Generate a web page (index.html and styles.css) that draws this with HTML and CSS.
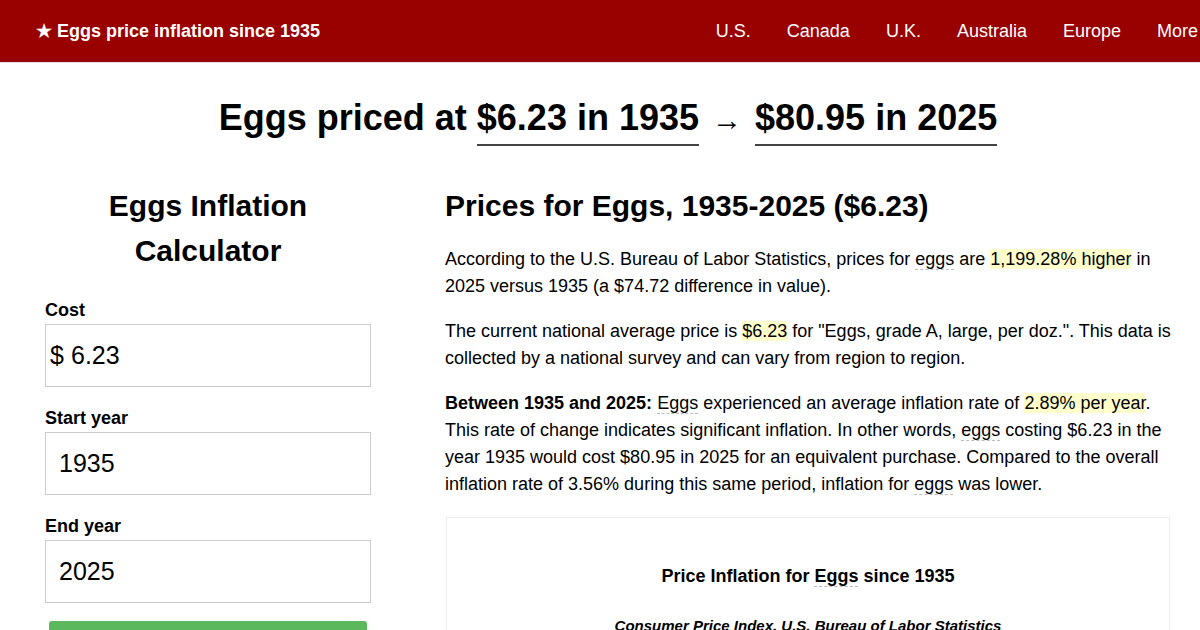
FILE: index.html
```html
<!DOCTYPE html>
<html lang="en">
<head>
    <meta charset="UTF-8">
    <meta name="viewport" content="width=device-width, initial-scale=1.0">
    <title>Eggs price inflation since 1935</title>
    <link rel="stylesheet" href="styles.css">
</head>
<body>
    <header class="topbar">
        <a class="brand" href="#">&#9733; Eggs price inflation since 1935</a>
        <nav class="nav">
            <a href="#">U.S.</a>
            <a href="#">Canada</a>
            <a href="#">U.K.</a>
            <a href="#">Australia</a>
            <a href="#">Europe</a>
            <a href="#">More</a>
        </nav>
    </header>

    <h1 class="headline">Eggs priced at <span class="under">$6.23 in 1935</span> <span class="arrow">&rarr;</span> <span class="under">$80.95 in 2025</span></h1>

    <main class="content">
        <section class="calculator">
            <h2>Eggs Inflation Calculator</h2>
            <form>
                <div class="form-group">
                    <label for="cost">Cost</label>
                    <div class="money">
                        <span class="currency">$</span>
                        <input type="text" id="cost" class="cost-input" value="6.23">
                    </div>
                </div>
                <div class="form-group">
                    <label for="start">Start year</label>
                    <input type="text" id="start" value="1935">
                </div>
                <div class="form-group">
                    <label for="end">End year</label>
                    <input type="text" id="end" value="2025">
                </div>
                <button type="submit" class="calc-btn">Calculate</button>
            </form>
        </section>

        <section class="summary">
            <h2>Prices for Eggs, 1935-2025 ($6.23)</h2>
            <p>According to the U.S. Bureau of Labor Statistics, prices for <abbr>eggs</abbr> are <span class="hl">1,199.28% higher</span> in 2025 versus 1935 (a $74.72 difference in value).</p>
            <p>The current national average price is <span class="hl">$6.23</span> for "Eggs, grade A, large, per doz.". This data is collected by a national survey and can vary from region to region.</p>
            <p><strong>Between 1935 and 2025:</strong> <abbr>Eggs</abbr> experienced an average inflation rate of <span class="hl">2.89% per year</span>. This rate of change indicates significant inflation. In other words, <abbr>eggs</abbr> costing $6.23 in the year 1935 would cost $80.95 in 2025 for an equivalent purchase. Compared to the overall inflation rate of 3.56% during this same period, inflation for <abbr>eggs</abbr> was lower.</p>

            <div class="chart-box">
                <h3>Price Inflation for <abbr>Eggs</abbr> since 1935</h3>
                <div class="chart-source">Consumer Price Index, U.S. Bureau of Labor Statistics</div>
            </div>
        </section>
    </main>
</body>
</html>
```

FILE: styles.css
```css
:root {
    --brand-red: #990000;
    --text-color: #000;
    --border-color: #cccccc;
    --highlight: #ffffcc;
}

* {
    margin: 0;
    padding: 0;
    box-sizing: border-box;
}

body {
    font-family: "Liberation Sans", Arial, sans-serif;
    color: var(--text-color);
    background: #fff;
    overflow: hidden;
}

.topbar {
    height: 63px;
    background-color: var(--brand-red);
    border-bottom: 1px solid #e8e0e0;
    display: flex;
    align-items: center;
    justify-content: space-between;
    padding-left: 36px;
    white-space: nowrap;
}

.topbar a {
    color: #fff;
    text-decoration: none;
    font-size: 18px;
}

.brand {
    font-weight: bold;
}

.nav {
    display: flex;
    gap: 36px;
    margin-right: 2px;
}

.headline {
    font-size: 36px;
    text-align: center;
    margin-top: 34px;
    line-height: 42px;
    padding-left: 16px;
}

.under {
    display: inline-block;
    border-bottom: 2px solid #444;
    padding-bottom: 5px;
}

.arrow {
    font-weight: normal;
    font-size: 30px;
    margin: 0 3px;
}

.content {
    display: grid;
    grid-template-columns: 326px 1fr;
    column-gap: 74px;
    padding: 0 28px 0 45px;
    margin-top: 37px;
}

.calculator h2 {
    font-size: 30px;
    line-height: 45px;
    text-align: center;
    margin-bottom: 27px;
}

.form-group {
    margin-bottom: 21px;
}

.form-group:last-of-type {
    margin-bottom: 18px;
}

.form-group label {
    display: block;
    font-weight: bold;
    font-size: 18px;
    margin-bottom: 3px;
}

.form-group input {
    width: 100%;
    height: 63px;
    border: 1px solid var(--border-color);
    font-family: "Liberation Sans", Arial, sans-serif;
    font-size: 25px;
    padding: 0 13px;
    color: #000;
}

.money {
    position: relative;
}

.currency {
    position: absolute;
    left: 5px;
    top: 17px;
    font-size: 25px;
}

.form-group .cost-input {
    padding-left: 25px;
}

.calc-btn {
    display: block;
    width: 318px;
    height: 44px;
    margin: 0 4px;
    background-color: #5cb85c;
    border: none;
    border-radius: 3px;
    color: #fff;
    font-size: 20px;
}

.summary {
    font-size: 18px;
    line-height: 27px;
}

.summary h2 {
    font-size: 30px;
    line-height: 45px;
    margin-bottom: 18px;
}

.summary p {
    margin-bottom: 18px;
}

.summary p:last-of-type {
    margin-bottom: 0;
}

abbr {
    text-decoration: none;
    border-bottom: 1px dashed #bbb;
}

.hl {
    background-color: var(--highlight);
}

.chart-box {
    border: 1px solid #eeeeee;
    margin: 19px 2px 0 1px;
    height: 200px;
    text-align: center;
    padding-top: 46px;
}

.chart-box h3 {
    font-size: 18px;
    line-height: 25px;
}

.chart-source {
    margin-top: 23px;
    font-size: 15px;
    font-weight: bold;
    font-style: italic;
}
```
